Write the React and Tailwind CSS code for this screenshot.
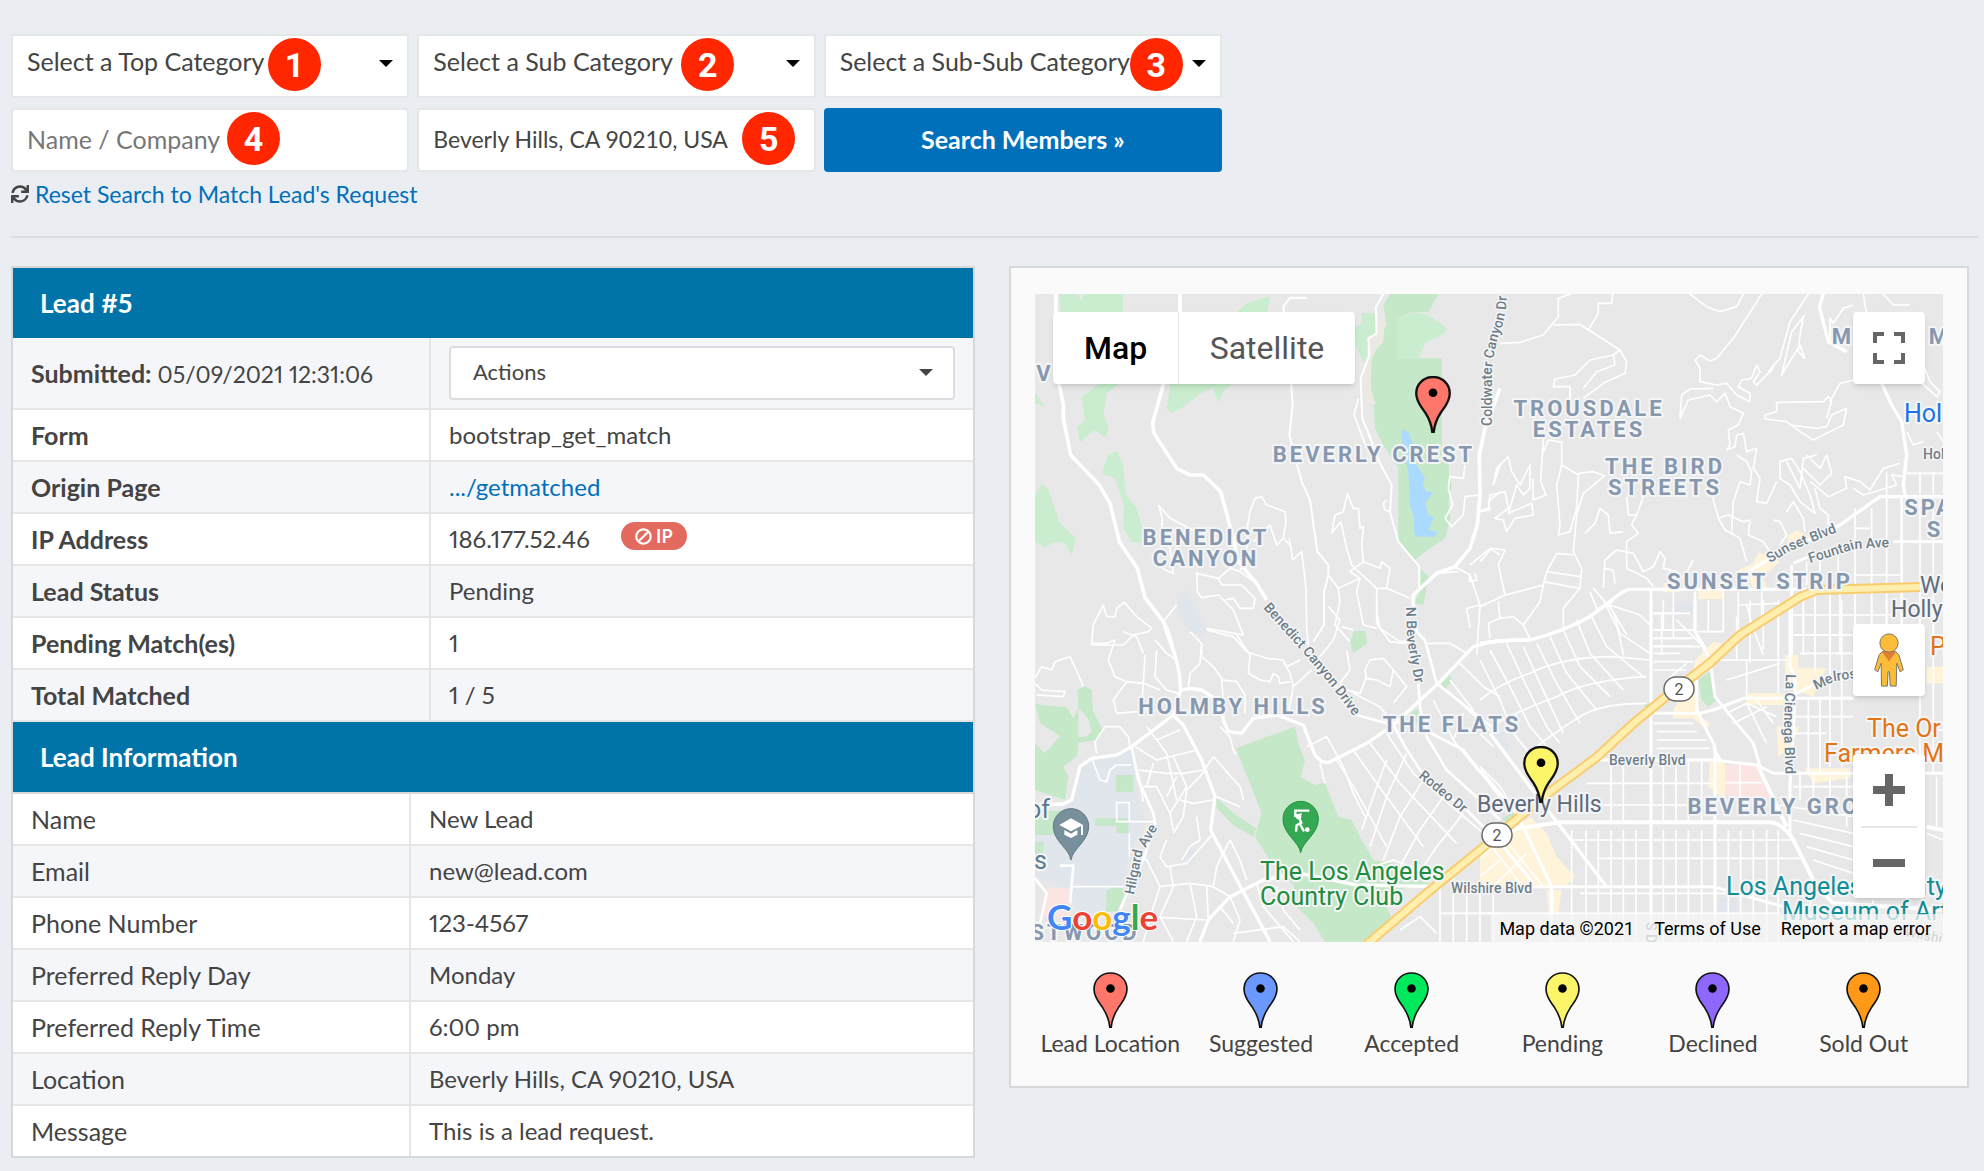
import { FaBan, FaSync } from 'react-icons/fa'

const CATEGORY_FILTERS = [
  { id: 'top-category', label: 'Select a Top Category', step: 1, badge: 'left-[257px] top-[4px]' },
  { id: 'sub-category', label: 'Select a Sub Category', step: 2, badge: 'left-[264px] top-[4px]' },
  { id: 'sub-sub-category', label: 'Select a Sub-Sub Category', step: 3, badge: 'left-[306px] top-[4px]' },
]

const LEAD_DETAILS = [
  { label: 'Form', value: 'bootstrap_get_match' },
  { label: 'Origin Page', value: '.../getmatched', link: true },
  { label: 'IP Address', value: '186.177.52.46', blockable: true },
  { label: 'Lead Status', value: 'Pending' },
  { label: 'Pending Match(es)', value: '1' },
  { label: 'Total Matched', value: '1 / 5' },
]

const LEAD_INFORMATION = [
  ['Name', 'New Lead'],
  ['Email', 'new@lead.com'],
  ['Phone Number', '123-4567'],
  ['Preferred Reply Day', 'Monday'],
  ['Preferred Reply Time', '6:00 pm'],
  ['Location', 'Beverly Hills, CA 90210, USA'],
  ['Message', 'This is a lead request.'],
]

const LEGEND = [
  { label: 'Lead Location', color: '#ff776b' },
  { label: 'Suggested', color: '#6b98ff' },
  { label: 'Accepted', color: '#00e85c' },
  { label: 'Pending', color: '#fdf569' },
  { label: 'Declined', color: '#8e67fd' },
  { label: 'Sold Out', color: '#ff9917' },
]

const AREA_LABELS = [
  [339, 168, 'BEVERLY CREST'],
  [171, 251, 'BENEDICT'],
  [171, 272, 'CANYON'],
  [554, 122, 'TROUSDALE'],
  [554, 143, 'ESTATES'],
  [630, 180, 'THE BIRD'],
  [630, 201, 'STREETS'],
  [725, 295, 'SUNSET STRIP'],
  [198, 420, 'HOLMBY HILLS'],
  [417, 438, 'THE FLATS'],
  [755, 520, 'BEVERLY GROVE'],
  [894, 221, 'SPA'],
  [900, 243, 'S'],
  [808, 50, 'M'],
  [905, 50, 'M'],
  [10, 87, 'V'],
  [50, 646, 'STWOOD'],
]

const PLACE_LABELS = [
  [442, 518, 'Beverly Hills', '#5f6b7a', 23],
  [885, 299, 'We', '#5f6b7a', 23],
  [856, 323, 'Holly', '#5f6b7a', 23],
  [225, 586, 'The Los Angeles', '#1e8e3e', 25],
  [225, 611, 'Country Club', '#1e8e3e', 25],
  [691, 601, 'Los Angeles County', '#128c96', 25],
  [747, 626, 'Museum of Art', '#128c96', 25],
  [832, 443, 'The Or', '#e37416', 25],
  [789, 468, 'Farmers M', '#e37416', 25],
  [895, 361, 'P', '#e37416', 25],
  [869, 128, 'Hol', '#1a73e8', 25],
  [-8, 524, 'of', '#5b7a8c', 25],
  [-1, 575, 's', '#5b7a8c', 25],
]

const STREET_LABELS = [
  ['coldwater', 'M457 132V75Q460 50 466 35T472 -6', 'Coldwater Canyon Dr'],
  ['benedict', 'M228 314L265 355Q300 395 324 430', 'Benedict Canyon Drive'],
  ['n-beverly', 'M371 313L372 345 382 400', 'N Beverly Dr'],
  ['rodeo', 'M383 483L432 523', 'Rodeo Dr'],
  ['hilgard', 'M99 601L107 560 126 528', 'Hilgard Ave'],
  ['wilshire', 'M416 599H510', 'Wilshire Blvd'],
  ['beverly-blvd', 'M574 471H670', 'Beverly Blvd'],
  ['sunset', 'M735 269L755 257 812 234', 'Sunset Blvd'],
  ['fountain', 'M775 269L820 255 870 252', 'Fountain Ave'],
  ['cienega', 'M751 380L749 430 751 500', 'La Cienega Blvd'],
  ['melrose', 'M781 396L800 387 850 380', 'Melros'],
  ['holloway', 'M888 165H940', 'Hol'],
  ['s-doheny', 'M611 628V660', 'S D'],
  ['wilshire-east', 'M869 642L910 650', 'Wilshi'],
]

const COLUMNS_SE = [275, 318, 355, 393, 430, 468, 550, 588, 625, 665, 745, 782, 820, 860, 895]
const COLUMNS_NE = [1125, 1175, 1220, 1320, 1360]

function Pin({ color, className, thin = false }) {
  return (
    <svg viewBox="0 0 106 170" className={className} aria-hidden="true">
      <path
        d="M53 3C24 3 3 25 3 52C3 76 18 92 29 108C42 128 49 148 51 168H55C57 148 64 128 77 108C88 92 103 76 103 52C103 25 82 3 53 3Z"
        fill={color}
        stroke="#111"
        strokeWidth={thin ? 5 : 7}
      />
      <circle cx="53" cy="50" r="13" fill="#000" />
    </svg>
  )
}

function StepBadge({ step, className }) {
  return (
    <span
      className={`pointer-events-none absolute flex h-[53px] w-[53px] items-center justify-center rounded-full bg-[#ff2600] font-['Roboto',sans-serif] text-[34px] leading-none font-bold text-white ${className}`}
    >
      {step}
    </span>
  )
}

function Caret({ className }) {
  return (
    <svg viewBox="0 0 14 7" className={`pointer-events-none absolute h-[7px] w-[14px] ${className}`} aria-hidden="true">
      <path d="M0 0H14L7 7Z" fill="currentColor" />
    </svg>
  )
}

function SearchForm() {
  return (
    <form className="grid max-w-[1211px] grid-cols-3 gap-x-2 gap-y-[10px]" onSubmit={(event) => event.preventDefault()}>
      {CATEGORY_FILTERS.map(({ id, label, step, badge }) => (
        <div key={id} className="relative">
          <select
            id={id}
            aria-label={label}
            className="h-16 w-full appearance-none border-2 border-[#e5e6e7] bg-white pr-10 pb-2 pl-[14px] text-[25px] text-[#444]"
          >
            <option>{label}</option>
          </select>
          <Caret className="top-[26px] right-4 text-black" />
          <StepBadge step={step} className={badge} />
        </div>
      ))}
      <div className="relative">
        <input
          type="text"
          aria-label="Name or company"
          placeholder="Name / Company"
          className="h-16 w-full rounded border-2 border-[#e5e6e7] bg-white px-[14px] pb-[3px] text-[25px] text-[#444] placeholder:text-[#777]"
        />
        <StepBadge step={4} className="top-[4px] left-[216px]" />
      </div>
      <div className="relative">
        <input
          type="text"
          aria-label="Location"
          defaultValue="Beverly Hills, CA 90210, USA"
          className="h-16 w-full rounded border-2 border-[#e5e6e7] bg-white px-[14px] pb-[3px] text-[23px] text-[#444]"
        />
        <StepBadge step={5} className="top-[4px] left-[325px]" />
      </div>
      <button type="submit" className="h-16 rounded bg-[#0070bb] text-[25px] font-bold text-white">
        Search Members »
      </button>
    </form>
  )
}

function PanelHeading({ children, className = '' }) {
  return (
    <h2 className={`flex items-center bg-[#0074a9] pl-[27px] text-[26px] font-bold text-white ${className}`}>{children}</h2>
  )
}

function LeadPanel() {
  return (
    <section className="self-start border-2 border-[#d6d8da] bg-white text-[24px] leading-[30px] proportional-nums">
      <PanelHeading className="h-[70px]">Lead #5</PanelHeading>
      <table className="w-full table-fixed border-collapse">
        <colgroup>
          <col className="w-[417px]" />
          <col />
        </colgroup>
        <tbody>
          <tr className="h-[71px] border-b-2 border-[#e5e5e5] bg-[#f5f6fa]">
            <th scope="row" className="border-r-2 border-[#e5e5e5] pl-[18px] text-left text-[25px] font-bold">
              Submitted: <span className="text-[23px] font-normal">05/09/2021 12:31:06</span>
            </th>
            <td className="px-[18px]">
              <div className="relative">
                <select
                  aria-label="Actions"
                  className="block h-[54px] w-full appearance-none rounded border-2 border-[#dcdddf] bg-white px-[22px] pb-[2px] text-[22px]"
                >
                  <option>Actions</option>
                </select>
                <Caret className="top-[23px] right-[22px]" />
              </div>
            </td>
          </tr>
          {LEAD_DETAILS.map(({ label, value, link, blockable }) => (
            <tr key={label} className="h-[52px] border-b-2 border-[#e5e5e5] even:bg-white odd:bg-[#f5f6fa]">
              <th scope="row" className="border-r-2 border-[#e5e5e5] pl-[18px] text-left text-[25px] font-bold">
                {label}
              </th>
              <td className="pl-[18px]">
                <div className="flex items-center">
                  {link ? (
                    <a href="#getmatched" className="text-[#0070bb]">
                      {value}
                    </a>
                  ) : (
                    <span>{value}</span>
                  )}
                  {blockable && (
                    <button
                      type="button"
                      className="mb-[6px] ml-[31px] flex h-7 w-[66px] items-center justify-center gap-1 rounded-full bg-[#e26a5e] text-[18px] font-bold text-white"
                    >
                      <FaBan className="h-[17px] w-[17px] rotate-90" />
                      IP
                    </button>
                  )}
                </div>
              </td>
            </tr>
          ))}
        </tbody>
      </table>
      <PanelHeading className="h-[72px] border-b-2 border-[#d6d8da]">Lead Information</PanelHeading>
      <table className="w-full table-fixed border-collapse">
        <colgroup>
          <col className="w-[397px]" />
          <col />
        </colgroup>
        <tbody>
          {LEAD_INFORMATION.map(([label, value]) => (
            <tr
              key={label}
              className="h-[52px] border-b-2 border-[#e5e5e5] first:h-[51px] last:h-[51px] last:border-b-0 odd:bg-white even:bg-[#f5f6fa]"
            >
              <th scope="row" className="border-r-2 border-[#e5e5e5] pl-[18px] text-left text-[25px] font-normal">
                {label}
              </th>
              <td className="pl-[18px]">{value}</td>
            </tr>
          ))}
        </tbody>
      </table>
    </section>
  )
}

// The four tiles below are drawn at three times the map's size.

function NorthWestTile() {
  return (
    <g transform="translate(-35 -39) scale(.33333)">
      <g fill="#c9edce">
        <path d="M178 117H235L242 138 255 117H369V200H185Z" />
        <path d="M811 123L800 180H700L740 145Z" />
        <path d="M512 385H700L685 395 672 405 655 443 637 400 610 410 590 425 550 455 515 474 500 460Z" />
        <path d="M246 425L300 385H358L320 415 310 480 325 515 318 548 285 525 240 562 232 515 255 495Z" />
        <path d="M105 410L133 455 105 445Z" />
        <path d="M305 655L325 600 350 588 368 625 378 720 410 760 430 830 425 865 395 860 370 820 372 750 345 670Z" />
        <path d="M105 720L125 685 145 705 180 805 228 850 215 900 195 865 165 860 135 877 105 860Z" />
        <path d="M1083 175H1125V235L1105 250 1100 310 1090 322 1068 275 1065 220 1085 205Z" />
      </g>
      <g fill="#c5e8c8">
        <path d="M1170 117H1315L1285 172H1230L1195 190V310H1326V600H1350L1345 640 1355 690 1345 745 1352 790 1335 850 1275 890 1245 915 1195 860V640L1150 570 1125 520 1120 450 1112 400 1115 310 1130 260 1160 210 1150 150Z" />
        <path d="M1260 940L1285 965 1270 1050 1240 1045 1260 1010Z" />
        <path d="M1062 1128H1095L1102 1165 1060 1195 1050 1160Z" />
      </g>
      <path d="M1195 190L1240 172 1285 180 1340 220 1335 235 1275 265 1255 310H1195Z" fill="#c9edce" />
      <path d="M1130 195H1155L1150 260 1128 285 1112 320V400L1128 448H1095L1085 370 1105 310 1108 250 1130 235Z" fill="#ece8e2" />
      <path d="M1203 525L1225 530 1245 580 1245 620 1275 670 1268 685 1278 710 1300 712 1275 745 1285 780 1302 785 1285 825 1313 830 1305 845 1250 845 1240 825 1243 790 1230 750 1225 650 1208 570Z" fill="#aadaff" />
      <path d="M530 1050L545 1010 565 1008 585 1050 625 1130 600 1145 570 1130 535 1080Z" fill="#e1e5ec" />
      <g fill="none" stroke="#fff" strokeLinejoin="round" strokeWidth="5">
        <path d="M475 750L487 790 485 840 510 880 520 955 495 945 470 915M475 750L510 790 590 830" />
        <path d="M740 830L750 770 765 730 785 725 800 750 855 770 858 800 850 850 870 870M740 830L745 860 720 950M760 860L790 830 810 810 830 870 850 850" />
        <path d="M868 850L878 915 905 890 910 930 918 1000 920 1120 925 1170" />
        <path d="M995 835L1005 780 1030 770 1042 715 1060 760 1075 760 1080 820 1090 815 1085 870 1090 920M995 835L1022 800 1040 880 1055 930" />
        <path d="M1055 930L1130 1000 1160 1000 1170 940 1145 920 1140 940 1090 920 1050 950 1080 970 1015 1000 985 960" />
        <path d="M1130 1000V1070L1140 1120 1200 1160 1240 1160M1160 1000L1230 1030" />
        <path d="M590 950L592 1010 605 1028 655 1020 700 1065 730 1140 620 1120M590 955L655 970 690 940 720 950 770 985M655 970L665 990 725 990 765 1030 760 1060 720 1060 700 1030 675 1035" />
        <path d="M275 1165L280 1110 310 1050 320 1085 345 1085 350 1060 373 1042 410 1085 455 1120 445 1130 400 1140 370 1170 275 1170Z" />
        <path d="M490 1100L530 1050M570 1130L605 1165V1200M520 1170L500 1110" />
        <path d="M1015 1000L1020 1040 1005 1110 1050 1160M1080 970L1070 1010 1090 1110 1130 1120" />
        <path d="M1350 660L1345 700 1358 750 1335 790 1355 815 1390 780 1395 725 1440 720M1350 665L1390 670 1395 630M1160 735L1150 745 1155 765 1170 770M1075 430L1062 480 1100 580M1087 490L1115 560" />
        <path d="M1440 770L1470 765 1465 740 1500 710M1480 690L1500 630M1310 955L1375 950M1365 935L1410 960 1408 980 1430 975 1425 955M1410 960L1440 1050 1430 1200M1440 1050L1400 1060 1410 1120M1410 930L1470 880 1500 900" />
        <path d="M920 128H870L850 155 868 300 878 450 868 540 905 680 930 735 952 890 985 930V960L972 1010V1110L940 1160" strokeWidth="6" />
        <path d="M1150 117L1128 155 1130 235 1105 250 1108 300 1082 370 1087 490 1115 560 1140 625 1175 690 1170 770 1195 860 1258 935V1000" strokeWidth="6" />
      </g>
      <g fill="none" stroke="#fff" strokeLinejoin="round" strokeWidth="11">
        <path d="M168 117L165 340 180 400 190 450 190 490 212 600 298 690 330 745 358 860 412 940 435 1028 490 1100 525 1200" />
        <path d="M540 117V200L492 380 458 505 462 535 530 640 570 660 610 660 662 710 700 850 715 920 770 985 800 1035" />
        <path d="M1500 400L1455 520 1438 600 1440 720 1432 810 1410 880 1365 935 1310 955 1240 1020 1240 1060" />
      </g>
    </g>
  )
}

function NorthEastTile() {
  return (
    <g transform="translate(445 -39) scale(.33333)">
      <g fill="#fff3d9">
        <path d="M775 945L820 925 835 895 870 900 900 920 850 965 860 1000H820L800 965Z" />
        <path d="M925 840L950 825 1000 850 960 880 920 870Z" />
        <path d="M550 985H600V1012H550ZM655 1005H730V1032H655Z" />
      </g>
      <path d="M582 1045H640V1072H582Z" fill="#e1e5ec" />
      <g fill="none" stroke="#fff" strokeLinejoin="round" strokeWidth="5">
        <path d="M60 265L120 262 190 240 235 185V130L290 110M220 210L300 208 420 285 440 320 435 355 370 385 310 430M300 208L325 225 355 175V145H395L398 117" />
        <path d="M420 285L400 300 330 315 285 360 225 372 220 395H270V440M400 300L405 330 350 350 310 400" />
        <path d="M630 117L680 155 720 170 770 155 790 117M845 117L760 250 710 310 690 318 660 300 645 315 660 340V380L710 390 740 385 770 420 810 440V415L775 395 785 375 815 370 830 330 840 350 820 380 830 390 880 340" />
        <path d="M985 117L930 200 900 310 865 350M975 180L935 230 905 360 960 270 975 310 955 290 960 240 970 185" />
        <path d="M600 490L605 420 630 402 700 400M600 490L625 435 690 420 710 440 735 415 750 455 790 475 775 510 745 525 750 570 740 585 765 575 770 540 790 535 800 590 830 580 820 640 840 670 830 740 860 745 890 680" />
        <path d="M770 600L800 620 815 650 810 690 780 680 760 740 755 830M855 480V492L920 500 960 530 1000 555 1090 510 1100 460 1055 480 1040 515 1010 520 930 510M855 480L890 470 890 442 1030 440 1045 425 1055 435 1040 490" />
        <path d="M1120 375L1080 385 1050 440M900 620L935 610 960 650 990 720 1005 775 960 740 930 690 900 670ZM920 620L960 700 970 610 1010 600M970 640L1020 690 1055 655 1040 600 1020 640 980 600M990 680L1045 725 1100 700 1095 665 1140 680 1170 705 1210 640 1260 625" />
        <path d="M880 795L900 800 920 840 900 870M920 770L940 740 970 790 975 830M1005 700L1020 760 1045 780V810M1120 700L1150 720 1250 690 1235 660 1275 665" />
        <path d="M190 550L182 680 198 720 160 735 158 670M245 560V630L230 690 240 810 235 840 270 830 290 760 295 660 245 630M295 655L340 650 375 662 310 715 290 780 280 890 305 940 300 1000M205 555L190 590M205 555L250 562" />
        <path d="M40 690L50 640 85 605 95 650 120 690 150 630 150 700 130 720 110 690 85 775 155 745 160 780 105 790 80 830 70 795 45 790 85 760 75 710 30 720 25 760 0 768" />
        <path d="M315 835L345 805 360 760 385 780 390 835 430 830M440 725L445 780 470 780 455 810 475 835 440 860 440 890M490 725L470 780M695 715L715 790 745 780 790 800 810 795 805 840 850 860 870 890M715 790L735 825 780 850 800 920" />
        <path d="M370 1000L375 915 410 885 460 895 490 950 520 935 540 890 555 910 550 940 590 950 610 970 640 915M370 940L400 945 405 985M440 890L440 940 500 970 520 995" />
        <path d="M0 920L35 880 75 885 55 930 75 1020 0 1055M75 1020L190 990 200 950 230 895 280 900M190 980L300 1000M200 950L300 965M190 990L180 1040 130 1110 150 1150M130 1110L100 1085 60 1090 25 1105 30 1150M60 1090L55 1040M300 1000L250 1060V1120M330 1010L350 1060 390 1050 410 1100 430 1200M390 1050L480 1080 510 1110M340 1000L400 1070 440 1140" />
        <path d="M520 1075H630M520 1125H640M520 1150H640M520 1175H660M545 1075V1200M580 1010V1150M685 1035V1130M730 1005V1130M645 1130H730M775 1010V1140M775 1050L900 1045M845 1010V1100M800 1050L820 1120 850 1200M895 1070V1200M935 1140H1120M935 1080H1240M970 1010V1200M1005 1010V1200M1050 1010V1200M1080 1010V1200" />
        {COLUMNS_NE.map((x) => (
          <path key={x} d={`M${x} ${x < 1200 ? 760 : 650}V1200`} />
        ))}
        <path d="M1075 870V990M1020 900V990M980 920V990M1125 960H1265M1125 820H1170M1280 655H1390M1150 117L1160 180M1120 150L1090 160 1060 205 1050 190V260M1210 117L1240 150H1290M1330 330L1350 380 1380 410 1370 425 1320 380M1280 530L1300 570 1330 560M1370 530L1390 560" />
      </g>
      <g fill="none" stroke="#fff" strokeLinejoin="round" strokeWidth="10">
        <path d="M0 1165Q60 1155 150 1155Q250 1130 330 1085Q400 1030 430 1010L445 1003H980" />
        <path d="M790 960L870 910 1080 810 1200 725H1390" />
        <path d="M1030 117L1018 155 1045 260 1100 290M1205 385L1235 450 1265 500 1280 600 1270 690 1275 720" />
        <path d="M1265 725V1200M935 930V1200M1240 860H1390M940 925L985 905M513 1005V1200M645 1010V1130L690 1200" strokeWidth="8" />
      </g>
    </g>
  )
}

function SouthWestTile() {
  return (
    <g transform="translate(-35 306) scale(.33333)">
      <path d="M238 500L285 480 395 450 420 620 440 665 385 760 375 860 320 920V940H230L210 870 105 830V690L215 600Z" fill="#e1e5ec" />
      <path d="M545 770L568 738 595 760 570 795Z" fill="#e1e5ec" />
      <path d="M140 865H215V950H125Z" fill="#fbe5e3" />
      <g fill="#c5e8c8">
        <path d="M105 310L125 315 200 322 220 355 235 325 232 270 255 258 275 270 278 330 310 395 290 420 235 428 230 470 190 500 205 530 195 600 105 570V430L135 460 180 408 120 370Z" />
        <path d="M235 325Q270 350 275 395Q255 420 235 408Z" fill="#e8e8e8" />
        <path d="M348 525H400V575H348ZM286 655H385V700H350V678H286ZM105 632H190V705H105ZM105 725H130V765H105ZM320 870L350 860 385 870 350 935H318Z" />
        <path d="M708 445L885 380 895 430 915 480 902 530 945 555 975 548 1015 650 1055 660 1085 720 1120 780 1240 800 1290 850 1140 880 1175 955 1095 1025H975L940 970 890 920 880 855 815 790 765 710 785 640Z" />
        <path d="M648 590L700 640 768 685 760 710 700 675 650 625ZM1325 250L1350 225 1357 240 1335 268ZM1225 345L1255 325 1258 370 1220 375Z" />
      </g>
      <g fill="none" stroke="#fff" strokeLinejoin="round" strokeWidth="5">
        <path d="M105 235L125 200 155 210 165 185 210 170 240 235 250 260M105 250L125 270 195 275 190 290 110 285M275 130L320 130 345 120 325 180 345 230 380 245 430 250 425 320M380 245L340 300 350 340 410 335 440 330M435 165L430 250 480 270M430 160L410 110 370 95" />
        <path d="M465 120L500 160 530 180M470 150L465 230 500 270 535 280M605 130L600 190 570 220 565 260M620 90L700 110 740 155 800 175 850 180 860 200 900 180M605 170L640 200 665 235 670 310M665 240L710 245 735 285V340M710 105L750 165 745 220 780 240 810 245 820 220 835 230 840 250 870 245M850 185L870 220 880 260 865 340M935 210L880 260" />
        <path d="M290 460L285 425 315 380 360 380 385 410 390 440M275 475L300 540 320 545 330 510 350 495 395 495M350 608H388V665H350ZM388 665H460M388 700V770M370 860H215M415 520L430 605" />
        <path d="M440 380L470 420 500 460 530 600M405 440L470 480 590 450M415 510L500 520 550 520 610 510M470 420L540 390M520 470L560 560 510 640M430 560L470 560 510 640 520 690M460 490L440 560M540 600L580 610 640 600M530 530L500 590M640 470L600 530 560 570 550 650 520 700" />
        <path d="M660 380L690 410 700 450 708 465M640 470L720 560 730 600M650 590L720 620M545 780L570 740 600 720 590 650M640 700L560 790 500 800 480 770 500 720M400 760L440 780 480 860 460 920 430 1025M480 860L570 850 640 860 690 890M510 800L520 860 480 950 520 1025M570 850L590 950 560 1025M620 860L625 960M690 720L650 800 640 860M690 720L720 780 740 840M440 950L620 960" />
        <path d="M690 890L720 960 700 1025M730 870L800 1000M770 850L790 920 880 1025M660 920L700 970M700 1000L850 980 900 1025M830 860L850 930 900 990" />
        <path d="M985 20L1020 60 1000 120 960 170 930 190M1025 80L1060 90M1130 0V70L1170 125 1220 130M1095 210L1110 180 1150 175 1180 210 1170 260 1130 240 1100 235ZM1040 150L1050 210 1020 250 1060 330M1100 230L1080 280 1000 260M1180 210L1220 260 1180 310M1060 280L1140 320 1180 370M1280 130L1350 130 1400 160M1350 240L1420 330M1380 190L1450 260 1500 290" />
        <path d="M920 440L980 410 1030 500 1060 580 1100 660M960 490L975 550M1010 480L1060 560 1160 740M1060 450L1130 550 1270 740M1110 430L1200 550 1370 730M1160 400L1240 520 1450 700M1160 480L1130 560 1085 690M1220 460L1160 590 1110 740M1270 540L1200 650 1150 780M1330 590L1260 690 1200 800M1390 640L1310 740 1250 830" />
        <path d="M1320 860V1025M1360 830V1025M1400 860V1025M1440 880V1025M1480 880V1025M1320 940H1500M1120 800L1180 780 1260 810M1200 990L1260 950 1310 1000M1300 300L1360 420M1340 270L1480 400M1390 340L1360 420 1440 520" />
      </g>
      <g fill="none" stroke="#fff" strokeLinejoin="round" strokeWidth="10">
        <path d="M440 0L490 65 525 165 538 220 542 270 570 265 605 270 665 310 670 360 685 395 725 400 760 355 830 345 910 375 945 465 965 485 985 488 1100 430 1180 375 1320 245 1420 140 1500 120" />
        <path d="M105 615L190 612 215 600 240 500 275 475 350 465 395 440 520 345 542 270M520 345L550 375 605 480 645 590 632 690 700 820 810 1025" />
        <path d="M395 440L415 540 460 640 465 670 430 780 385 870 360 930M180 797H220L210 910M105 835L140 880 120 970" strokeWidth="8" />
        <path d="M600 1025L625 960 690 890 790 840 900 820 1070 855 1320 860" />
        <path d="M1240 60L1250 95 1275 120 1310 250 1430 345 1500 400M1070 345L1180 375 1215 440 1280 540 1400 630 1460 690M1255 250L1260 320 1280 410 1340 510 1440 600 1500 660M1275 390L1390 450 1500 590" strokeWidth="8" />
      </g>
    </g>
  )
}

function SouthEastTile() {
  return (
    <g transform="translate(445 306) scale(.33333)">
      <g fill="#fff3d9">
        <path d="M0 760L150 650 200 700 230 770 285 830 260 855 170 860 100 870 0 850Z" />
        <path d="M200 870H245L235 940H205ZM580 330L600 290 650 240 660 350 690 370 680 390 640 355H580ZM645 180L700 125 725 130 690 200 640 215ZM690 480H735V600L685 560Z" />
        <path d="M915 165H955V205H1040L1000 290 915 260ZM800 280H910V315H800ZM890 380H960L930 440 895 470ZM975 505H1110V535L1000 550ZM1340 200H1390V250H1340Z" />
      </g>
      <path d="M735 495H830L870 595 735 585Z" fill="#fbe5e3" />
      <path d="M655 240L695 210 710 300 685 320 665 300ZM490 315L520 305 510 330ZM65 655L105 635 115 655 85 675Z" fill="#c5e8c8" />
      <path d="M715 895H770V935H715ZM30 400L70 395 90 450 60 455Z" fill="#e1e5ec" />
      <g fill="none" stroke="#fff" strokeLinejoin="round" strokeWidth="5">
        {COLUMNS_SE.map((x) => (
          <path key={x} d={`M${x} 690V1025`} />
        ))}
        <path d="M550 480V670M588 480V670M625 480V670M665 480V670M430 480V670M393 480V670M320 550H700M280 615H620M270 720H935M350 775H960M0 940H900M300 880H880" />
        <path d="M0 180L60 300 100 400 180 500M30 150L90 260 150 380 210 450M80 130L140 260 200 380 240 430M130 140L180 250 250 400M170 130L230 250 300 370M210 110L260 220 350 330M250 90L300 200 390 290M290 60L330 160 430 270M330 40L380 140 490 230M380 20L420 100 510 160" />
        <path d="M0 300Q60 250 150 220Q250 170 400 170L510 180M30 380Q120 330 230 290Q320 240 500 230M130 470Q220 400 300 350Q360 310 500 310" />
        <path d="M520 40H600M520 90H640M520 115H620M520 138H640M520 160H600M520 185H640M520 210H620M550 0V90M590 60L660 130M560 240L620 190M520 370H640M530 395H650M530 420H680M530 445H690" />
        <path d="M810 0V190M850 0V150M895 0V280M770 50V180M720 180H920M740 240L900 190M800 180V290M740 340L800 310 860 430M800 310L890 350M830 300L880 370M760 370L860 320" />
        <path d="M970 0V100M1005 0V220M1050 0V500M1085 0V500M940 105H1120M960 160H1120M985 300V520M1020 290V520M1125 0V70M1175 0V70M1220 0V70M1320 80V520M1360 80V520M1340 390H1390M940 350H1120M940 400H1040" />
        <path d="M960 525V600M1000 525V620M1050 525V640M1100 525V680M940 560H1120M900 615L1120 650M940 660L1120 700M960 700L1120 740M980 740L1120 780M1000 780L1120 820M1370 530V680M1340 700L1390 720M920 930L1120 960M1000 880L960 1025M1180 900L1160 1025M1300 960V1025" />
        <path d="M735 548H845M780 495V590M0 400L40 440M0 500L60 560 110 640M0 830L60 780M40 860L140 760M20 720L120 850M60 700L190 860" />
      </g>
      <g fill="none" stroke="#fff" strokeLinejoin="round" strokeWidth="10">
        <path d="M0 130Q60 120 150 120Q250 95 330 50L400 0" />
        <path d="M645 0V95L690 180 705 290 770 370 820 430 840 500M650 240V330L705 440V1025M513 0V1025" strokeWidth="9" />
        <path d="M520 340H660L700 330 790 295H920L1000 255M930 0V200L945 230V300L930 560V700M920 295H1120" strokeWidth="9" />
        <path d="M350 480H700L830 495 880 520H1390M160 860H700L910 920M700 440L720 480" strokeWidth="9" />
        <path d="M105 685L150 680 240 667H870Q910 670 940 720L1010 860 1060 910 1390 930M830 490L920 680M1340 680L1390 690" strokeWidth="12" />
        <path d="M30 400L120 520 180 600 380 860M0 510L110 640 215 860V1025M70 740L160 850" />
        <path d="M0 770L60 720 120 680" />
      </g>
    </g>
  )
}

function RouteShield({ x, y }) {
  return (
    <g>
      <rect x={x - 15} y={y - 12} width="30" height="24" rx="12" fill="#fff" stroke="#6a6a6a" strokeWidth="1.5" />
      <text x={x} y={y + 6} textAnchor="middle" fontSize="16" fill="#555">
        2
      </text>
    </g>
  )
}

function PlacePins() {
  return (
    <g transform="translate(-35 306) scale(.33333)">
      <path d="M213 780C208 745 160 725 160 679A53 53 0 0 1 266 679C266 725 218 745 213 780Z" fill="#78909c" stroke="#5f7783" strokeWidth="3" />
      <path d="M213 655L178 675 213 694 243 678V705H249V675ZM193 690V704L213 714 232 704V690L213 701Z" fill="#fff" />
      <path d="M902 758C897 724 849 703 849 657A53 53 0 0 1 955 657C955 703 907 724 902 758Z" fill="#34a853" stroke="#23903f" strokeWidth="3" />
      <path d="M928 632H886V648L905 642M896 650L904 668 890 676 888 695M900 672L912 694" fill="none" stroke="#fff" strokeWidth="7" />
      <circle cx="896" cy="650" r="8" fill="#fff" />
      <circle cx="922" cy="689" r="7" fill="#fff" />
    </g>
  )
}

function MapDrawing() {
  return (
    <svg
      viewBox="0 0 908 648"
      preserveAspectRatio="xMidYMid slice"
      className="block h-full w-full font-['Roboto',sans-serif]"
      role="img"
      aria-label="Map of Beverly Hills"
    >
      <rect width="908" height="648" fill="#e8e8e8" />
      <NorthWestTile />
      <NorthEastTile />
      <SouthWestTile />
      <SouthEastTile />
      <g fill="none" strokeLinejoin="round">
        <path d="M885 293L782 296 765 303 705 341 675 369 632 402 600 428 562 463 508 503 445 556 392 599 330 652" stroke="#f9cd6f" strokeWidth="10" />
        <path d="M885 293L782 296 765 303 705 341 675 369 632 402 600 428 562 463 508 503 445 556 392 599 330 652" stroke="#ffefae" strokeWidth="6" />
      </g>
      <g stroke="#f4f5f6" strokeWidth="4" strokeLinejoin="round" paintOrder="stroke">
        <g fill="#6f7d88" fontSize="14" fontWeight="500" strokeWidth="3">
          {STREET_LABELS.map(([id, d, name]) => (
            <g key={id}>
              <path id={id} d={d} fill="none" stroke="none" />
              <text>
                <textPath href={`#${id}`}>{name}</textPath>
              </text>
            </g>
          ))}
        </g>
        {AREA_LABELS.map(([x, y, name]) => (
          <text key={`${x}-${y}`} x={x} y={y} textAnchor="middle" className="tracking-[3px]" fontSize="22" fontWeight="700" fill="#8798ae">
            {name}
          </text>
        ))}
        {PLACE_LABELS.map(([x, y, name, color, size]) => (
          <text key={`${x}-${y}`} x={x} y={y} fontSize={size} fill={color}>
            {name}
          </text>
        ))}
      </g>
      <RouteShield x={644} y={395} />
      <RouteShield x={462} y={541} />
      <PlacePins />
    </svg>
  )
}

function Pegman() {
  return (
    <svg viewBox="0 0 92 164" className="h-[54px] w-[30px]" aria-hidden="true">
      <path
        d="M26 56H66L76 66 90 112 80 118 70 92 68 162H50L47 118H43L41 162H23L22 92 12 118 2 112 16 66Z"
        fill="#fbbc3a"
        stroke="#77736a"
        strokeWidth="3"
      />
      <path d="M24 56H68L46 86Z" fill="#e37d35" />
      <circle cx="46" cy="30" r="28" fill="#fbbc3a" stroke="#77736a" strokeWidth="3" />
    </svg>
  )
}

function GoogleLogo() {
  return (
    <svg viewBox="0 0 120 44" className="absolute bottom-0 left-2 h-11 w-[120px] font-['Lato',sans-serif]" role="img" aria-label="Google">
      <text x="4" y="32" fontSize="35" fontWeight="700" stroke="#fff" strokeWidth="2" paintOrder="stroke">
        <tspan fill="#4285f4">G</tspan>
        <tspan fill="#ea4335">o</tspan>
        <tspan fill="#fbbc05">o</tspan>
        <tspan fill="#4285f4">g</tspan>
        <tspan fill="#34a853">l</tspan>
        <tspan fill="#ea4335">e</tspan>
      </text>
    </svg>
  )
}

function LeadMap() {
  return (
    <div className="relative h-[648px] overflow-hidden font-['Roboto',sans-serif]">
      <MapDrawing />
      <Pin color="#ff776b" className="absolute top-[82px] left-[380px] h-[57px] w-9" />
      <Pin color="#fdf569" className="absolute top-[452px] left-[488px] h-[57px] w-9" />

      <div className="absolute top-[18px] left-[18px] flex h-[72px] rounded bg-white text-[32px] shadow-md">
        <button type="button" className="w-[126px] border-r border-[#e6e6e6] font-medium text-black">
          Map
        </button>
        <button type="button" className="w-[176px] text-[#565656]">
          Satellite
        </button>
      </div>

      <button
        type="button"
        aria-label="Toggle fullscreen view"
        className="absolute top-[18px] right-[18px] flex h-[72px] w-[72px] items-center justify-center rounded bg-white shadow-md"
      >
        <svg viewBox="0 0 32 32" className="h-8 w-8" fill="none" stroke="#666" strokeWidth="4">
          <path d="M2 11V2H11M21 2H30V11M30 21V30H21M11 30H2V21" />
        </svg>
      </button>

      <div className="absolute right-[18px] bottom-[44px] flex w-[72px] flex-col gap-[58px]">
        <button
          type="button"
          aria-label="Street View"
          className="flex h-[72px] items-center justify-center rounded bg-white shadow-md"
        >
          <Pegman />
        </button>
        <div className="flex flex-col rounded bg-white shadow-md">
          <button type="button" aria-label="Zoom in" className="flex h-[72px] items-center justify-center">
            <svg viewBox="0 0 32 32" className="h-8 w-8" stroke="#666" strokeWidth="8">
              <path d="M16 0V32M0 16H32" />
            </svg>
          </button>
          <div className="mx-2 h-[2px] bg-[#e6e6e6]" />
          <button type="button" aria-label="Zoom out" className="flex h-[70px] items-center justify-center">
            <svg viewBox="0 0 32 32" className="h-8 w-8" stroke="#666" strokeWidth="8">
              <path d="M0 16H32" />
            </svg>
          </button>
        </div>
      </div>

      <GoogleLogo />
      <div className="absolute right-0 bottom-0 flex h-7 items-center gap-5 bg-[#f5f5f5]/75 pr-3 pl-2 text-[18px] text-black">
        <span>Map data ©2021</span>
        <a href="#terms">Terms of Use</a>
        <a href="#report">Report a map error</a>
      </div>
    </div>
  )
}

function MapPanel() {
  return (
    <section className="self-start border-2 border-[#d6d8da] bg-[#fafafa] px-6 pt-[26px] pb-7">
      <LeadMap />
      <ul className="mt-[30px] grid grid-cols-6 pr-1">
        {LEGEND.map(({ label, color }) => (
          <li key={label} className="flex flex-col items-center text-[23px] leading-[30px] whitespace-nowrap">
            <Pin color={color} className="h-14 w-[35px]" thin />
            {label}
          </li>
        ))}
      </ul>
    </section>
  )
}

function App() {
  return (
    <main className="min-h-screen bg-[#eaedf2] pt-[34px] pr-[15px] pb-[13px] pl-[11px] font-['Lato',sans-serif] text-[#444]">
      <SearchForm />
      <div className="mt-[7px] flex items-center gap-[6px] text-[23px] leading-[30px]">
        <FaSync className="h-[18px] w-[18px]" />
        <a href="#reset" className="text-[#0070bb]">
          Reset Search to Match Lead's Request
        </a>
      </div>
      <hr className="mt-[27px] -mr-[9px] border-t-2 border-[#dadcde]" />
      <div className="mt-7 grid grid-cols-[964fr_960fr] gap-[34px]">
        <LeadPanel />
        <MapPanel />
      </div>
    </main>
  )
}

export default App
